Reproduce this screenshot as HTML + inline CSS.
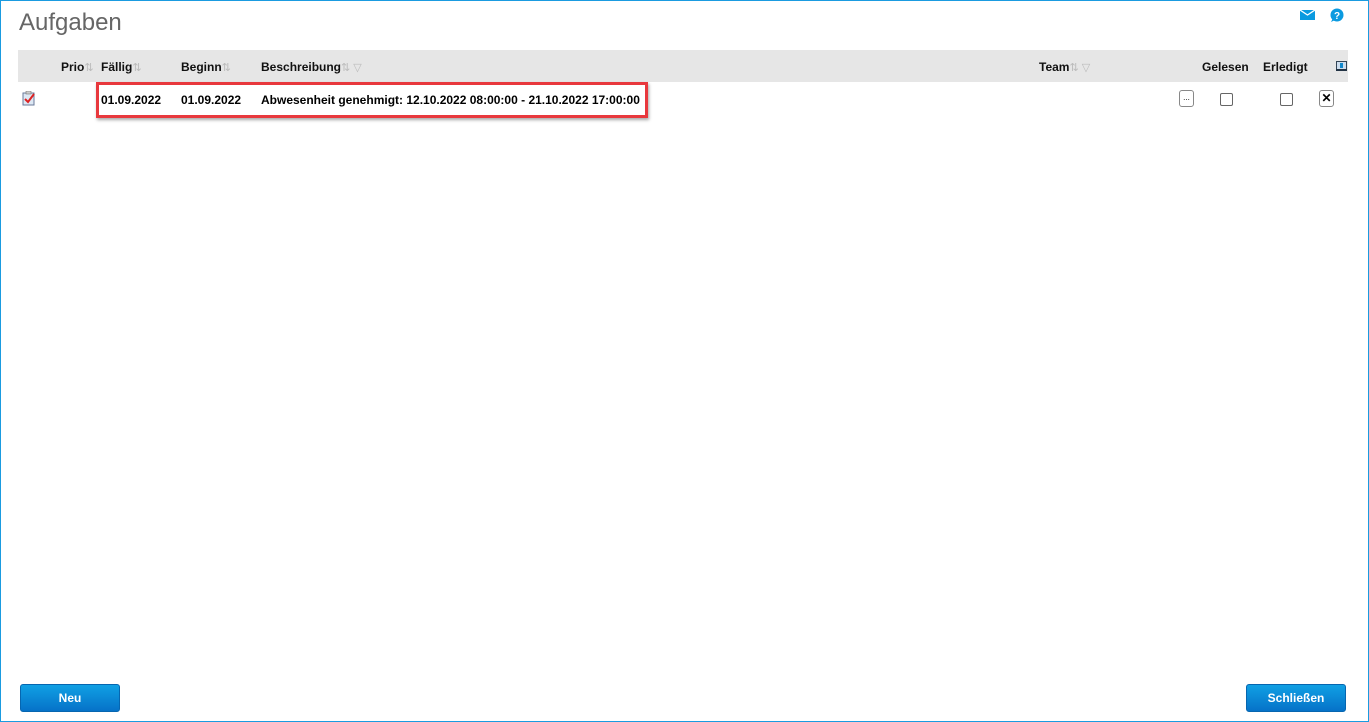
<!DOCTYPE html>
<html><head><style>
*{margin:0;padding:0;box-sizing:border-box}
body{width:1369px;height:722px;overflow:hidden;background:#fff;font-family:"Liberation Sans",Arial,sans-serif;position:relative}
.frame{position:absolute;left:0;top:0;width:1369px;height:722px;border:1px solid #1a9be0}
.t{position:absolute;white-space:nowrap}
h1{position:absolute;left:19px;top:9px;font-size:24px;font-weight:normal;color:#666}
.bar{position:absolute;left:18px;top:50px;width:1330px;height:32px;background:#e6e6e6}
.h{position:absolute;top:60px;font-size:12px;font-weight:bold;color:#111}
.s{color:#bbb;font-weight:normal;font-size:11px}
.r{position:absolute;top:93px;font-size:12px;font-weight:bold;color:#000}
.cb{position:absolute;top:93px;width:13px;height:13px;border:1px solid #666;border-radius:2px;background:#fff}
.red{position:absolute;left:96px;top:82px;width:552px;height:36px;border:3px solid #e8383d;box-shadow:1px 2px 3px rgba(0,0,0,.35)}
.btn{position:absolute;top:684px;height:28px;border-radius:3px;background:linear-gradient(#10a0e4,#0672c8);border:1px solid #0666b0;color:#fff;font-size:12px;font-weight:bold;text-align:center;line-height:26px}
</style></head><body>
<div class="frame"></div>
<h1>Aufgaben</h1>
<svg style="position:absolute;left:1300px;top:10px" width="15" height="10"><rect width="15" height="10" fill="#0a9ae0"/><path d="M0 0 L7.5 5 L15 0" stroke="#fff" stroke-width="1.3" fill="none"/></svg>
<svg style="position:absolute;left:1329px;top:8px" width="15" height="15"><circle cx="8" cy="7" r="6.5" fill="#0a9ae0"/><path d="M2 14 L4 10 L6 12Z" fill="#0a9ae0"/><text x="8" y="11" font-size="10" font-weight="bold" fill="#fff" text-anchor="middle" font-family="Liberation Sans">?</text></svg>
<div class="bar"></div>
<div class="h" style="left:61px">Prio<span class="s">⇅</span></div>
<div class="h" style="left:101px">Fällig<span class="s">⇅</span></div>
<div class="h" style="left:181px">Beginn<span class="s">⇅</span></div>
<div class="h" style="left:261px">Beschreibung<span class="s">⇅ ▽</span></div>
<div class="h" style="left:1039px">Team<span class="s">⇅ ▽</span></div>
<div class="h" style="left:1202px">Gelesen</div>
<div class="h" style="left:1263px">Erledigt</div>
<svg style="position:absolute;left:1336px;top:61px" width="11" height="10"><rect x="0.5" y="0.5" width="10" height="8" fill="#cde" stroke="#345"/><rect x="4" y="2" width="3" height="5" fill="#18c"/><rect y="8" width="11" height="2" fill="#234"/></svg>
<svg style="position:absolute;left:22px;top:91px" width="14" height="15"><rect x="1" y="2" width="11" height="12" fill="#dde8f4" stroke="#6a7a9a"/><rect x="4" y="0" width="5" height="3" fill="#ccc" stroke="#777" stroke-width=".6"/><path d="M3 8 L6 11 L12 3" stroke="#d22" stroke-width="2" fill="none"/></svg>
<div class="r" style="left:101px">01.09.2022</div>
<div class="r" style="left:181px">01.09.2022</div>
<div class="r" style="left:261px">Abwesenheit genehmigt: 12.10.2022 08:00:00 - 21.10.2022 17:00:00</div>
<div class="red"></div>
<div class="cb" style="left:1179px;top:90px;width:15px;height:17px;border-color:#888;border-radius:3px;font-size:8px;text-align:center;line-height:13px">...</div>
<div class="cb" style="left:1220px"></div>
<div class="cb" style="left:1280px"></div>
<div class="cb" style="left:1319px;top:90px;width:15px;height:17px;border-color:#888;border-radius:3px;font-size:12px;font-weight:bold;text-align:center;line-height:15px">✕</div>
<div class="btn" style="left:20px;width:100px">Neu</div>
<div class="btn" style="left:1246px;width:100px">Schließen</div>
</body></html>
